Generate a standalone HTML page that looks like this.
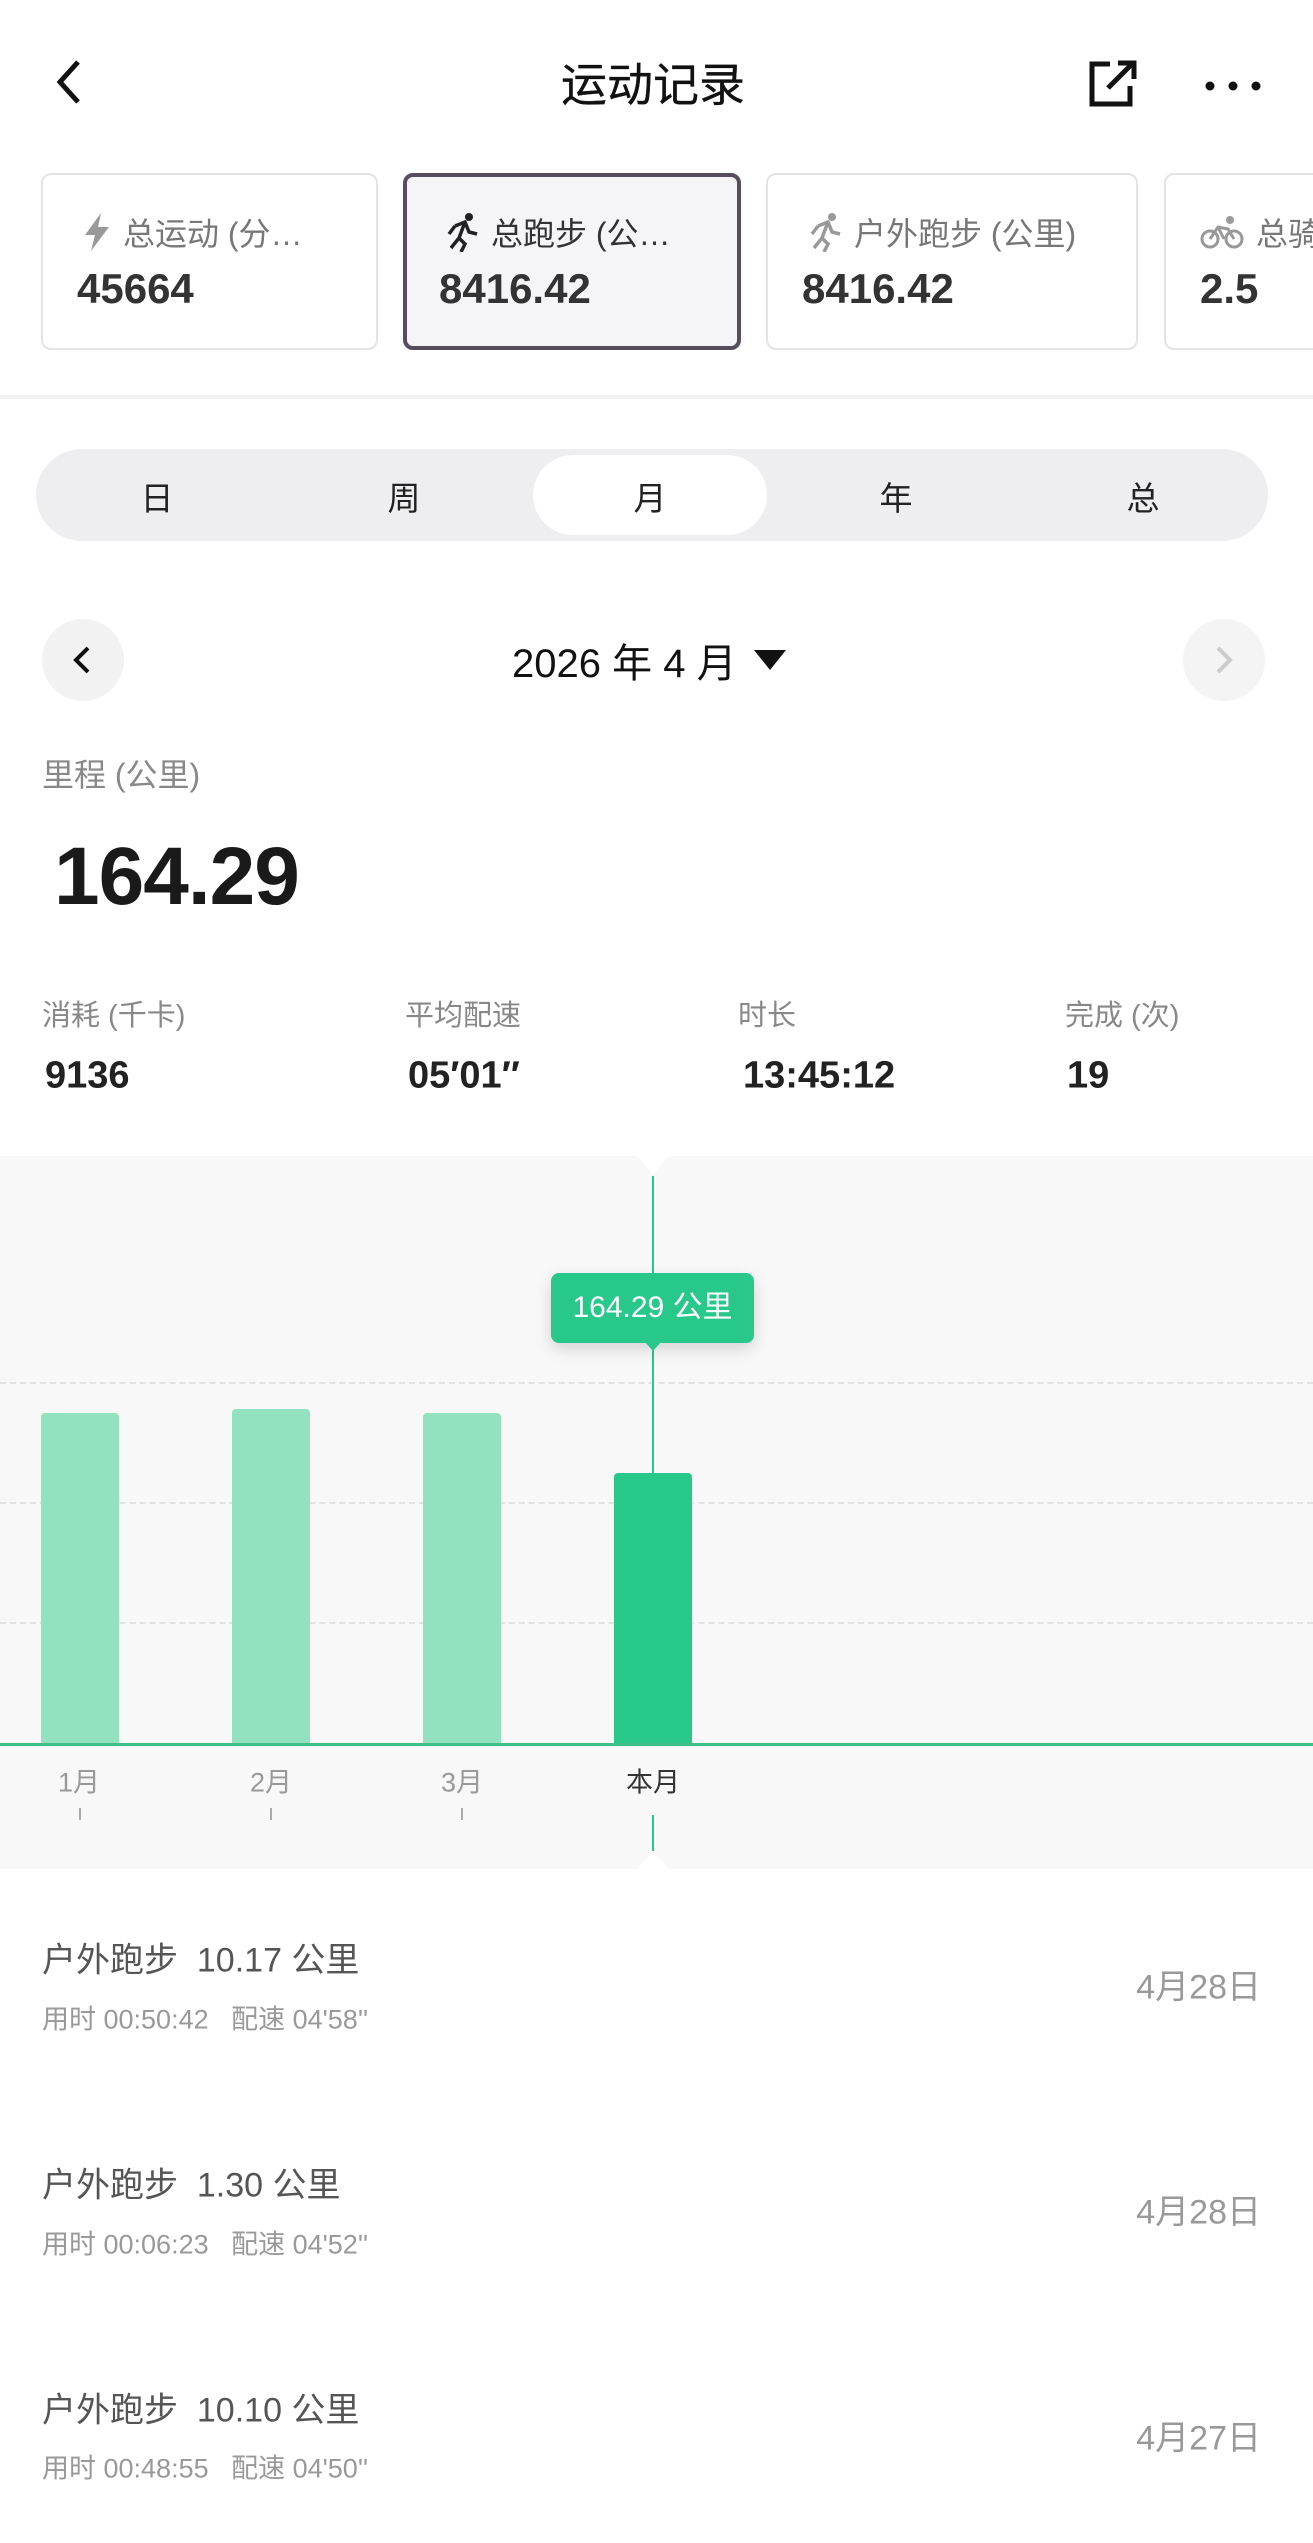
<!DOCTYPE html>
<html><head><meta charset="utf-8"><style>
*{margin:0;padding:0;box-sizing:border-box}
body{width:1313px;height:2543px;background:#fff;position:relative;overflow:hidden;font-family:"Liberation Sans","Noto Sans CJK SC",sans-serif;color:#222}
.a{position:absolute;white-space:nowrap}
.card{position:absolute;top:173px;height:177px;border:2px solid #e4e4e4;border-radius:10px;background:#fff}
.card .l{position:absolute;left:40px;top:34px;font-size:32px;color:#777;display:flex;align-items:center;gap:12px}
.card .v{position:absolute;left:34px;top:90px;font-size:42px;font-weight:bold;color:#333}
.seg{position:absolute;top:496px;font-size:33px;transform:translate(-50%,-50%)}
.mid{transform:translateY(-50%)}
.bar{position:absolute;width:78px;border-radius:4px 4px 0 0}
.dash{position:absolute;left:0;width:1313px;border-top:2px dashed #e2e2e2}
.xl{position:absolute;top:1780px;font-size:27px;color:#999;transform:translate(-50%,-50%)}
.tk{position:absolute;top:1808px;width:2px;height:12px;background:#aaa}
.it{position:absolute;left:42px;font-size:34px;color:#555}
.sb{position:absolute;left:42px;font-size:27px;color:#999}
.dt{position:absolute;right:52px;font-size:34px;color:#999}
</style></head><body>
<svg class="a" style="left:50px;top:58px" width="36" height="48" viewBox="0 0 36 48"><path d="M28 4 L10 24 L28 44" fill="none" stroke="#111" stroke-width="5"/></svg>
<div class="a mid" style="left:0;width:1306px;text-align:center;top:82px;font-size:46px;color:#111;-webkit-text-stroke:0.3px #111">运动记录</div>
<svg class="a" style="left:1088px;top:58px" width="52" height="50" viewBox="0 0 52 50"><path d="M22 6 H4 V46 H42 V28" fill="none" stroke="#111" stroke-width="5"/><path d="M20 30 L44 6 M30 5 H46 V21" fill="none" stroke="#111" stroke-width="5"/></svg>
<div class="a" style="left:1205px;top:78px"><svg width="56" height="10"><circle cx="5" cy="5" r="4.5" fill="#111"/><circle cx="28" cy="5" r="4.5" fill="#111"/><circle cx="51" cy="5" r="4.5" fill="#111"/></svg></div>

<div class="card" style="left:41px;width:337px"><div class="l"><svg width="28" height="38" viewBox="0 0 28 38"><path d="M18 0 L2 22 H12 L8 38 L26 14 H15 Z" fill="#999"/></svg>总运动 (分…</div><div class="v">45664</div></div>
<div class="card" style="left:403px;width:338px;border:4px solid #564d5e;background:#f5f5f8"><div class="l" style="color:#333;left:38px;top:32px"><svg width="34" height="40" viewBox="0 0 34 40"><circle cx="24" cy="5" r="4" fill="#222"/><path d="M10 14 L20 10 L24 20 L32 22 M20 10 L14 26 L20 32 L16 40 M14 26 L6 36 M10 14 L4 22" fill="none" stroke="#222" stroke-width="3.5"/></svg>总跑步 (公…</div><div class="v" style="left:32px;top:88px">8416.42</div></div>
<div class="card" style="left:766px;width:372px"><div class="l"><svg width="34" height="40" viewBox="0 0 34 40"><circle cx="24" cy="5" r="4" fill="#999"/><path d="M10 14 L20 10 L24 20 L32 22 M20 10 L14 26 L20 32 L16 40 M14 26 L6 36 M10 14 L4 22" fill="none" stroke="#999" stroke-width="3.5"/></svg>户外跑步 (公里)</div><div class="v">8416.42</div></div>
<div class="card" style="left:1164px;width:200px"><div class="l" style="left:34px"><svg width="44" height="34" viewBox="0 0 44 34"><circle cx="10" cy="24" r="8" fill="none" stroke="#999" stroke-width="3"/><circle cx="34" cy="24" r="8" fill="none" stroke="#999" stroke-width="3"/><circle cx="30" cy="5" r="4" fill="#999"/><path d="M10 24 L18 12 L28 14 L34 24 M18 12 L24 24" fill="none" stroke="#999" stroke-width="3"/></svg>总骑</div><div class="v">2.5</div></div>

<div class="a" style="left:0;top:395px;width:1313px;height:4px;background:#f2f2f2"></div>

<div class="a" style="left:36px;top:449px;width:1232px;height:92px;border-radius:46px;background:#eeeef0"></div>
<div class="a" style="left:533px;top:455px;width:234px;height:80px;border-radius:40px;background:#fff"></div>
<div class="seg" style="left:157px">日</div><div class="seg" style="left:404px">周</div><div class="seg" style="left:650px">月</div><div class="seg" style="left:896px">年</div><div class="seg" style="left:1143px">总</div>

<div class="a" style="left:42px;top:619px;width:82px;height:82px;border-radius:50%;background:#f2f2f2"></div>
<svg class="a" style="left:70px;top:645px" width="24" height="30" viewBox="0 0 24 30"><path d="M18 3 L6 15 L18 27" fill="none" stroke="#111" stroke-width="4"/></svg>
<div class="a" style="left:1183px;top:619px;width:82px;height:82px;border-radius:50%;background:#f4f4f4"></div>
<svg class="a" style="left:1212px;top:645px" width="24" height="30" viewBox="0 0 24 30"><path d="M6 3 L18 15 L6 27" fill="none" stroke="#ccc" stroke-width="4"/></svg>
<div class="a mid" style="left:512px;top:660px;font-size:40px;color:#111">2026 年 4 月</div>
<svg class="a" style="left:754px;top:650px" width="32" height="20"><path d="M0 0 H32 L16 20 Z" fill="#111"/></svg>

<div class="a mid" style="left:42px;top:773px;font-size:32px;color:#888">里程 (公里)</div>
<div class="a mid" style="left:54px;top:877px;font-size:82px;font-weight:bold;color:#1a1a1a;letter-spacing:-1px">164.29</div>

<div class="a mid" style="left:42px;top:1013px;font-size:29px;color:#888">消耗 (千卡)</div>
<div class="a mid" style="left:405px;top:1013px;font-size:29px;color:#888">平均配速</div>
<div class="a mid" style="left:738px;top:1013px;font-size:29px;color:#888">时长</div>
<div class="a mid" style="left:1065px;top:1013px;font-size:29px;color:#888">完成 (次)</div>
<div class="a mid" style="left:45px;top:1076px;font-size:38px;font-weight:bold">9136</div>
<div class="a mid" style="left:408px;top:1076px;font-size:38px;font-weight:bold">05′01″</div>
<div class="a mid" style="left:743px;top:1076px;font-size:38px;font-weight:bold">13:45:12</div>
<div class="a mid" style="left:1067px;top:1076px;font-size:38px;font-weight:bold">19</div>

<div class="a" style="left:0;top:1156px;width:1313px;height:713px;background:#f8f8f8"></div>
<svg class="a" style="left:637px;top:1156px" width="32" height="20"><path d="M0 0 H32 L16 18 Z" fill="#fff"/></svg>
<svg class="a" style="left:637px;top:1851px" width="32" height="18"><path d="M0 18 H32 L16 0 Z" fill="#fff"/></svg>
<div class="dash" style="top:1382px"></div><div class="dash" style="top:1502px"></div><div class="dash" style="top:1622px"></div>
<div class="bar" style="left:41px;top:1413px;height:331px;background:#92e2c0"></div>
<div class="bar" style="left:232px;top:1409px;height:335px;background:#92e2c0"></div>
<div class="bar" style="left:423px;top:1413px;height:331px;background:#92e2c0"></div>
<div class="bar" style="left:614px;top:1473px;height:271px;background:#28c78a"></div>
<div class="a" style="left:652px;top:1176px;width:2px;height:298px;background:#28c78a"></div>
<div class="a" style="left:652px;top:1815px;width:2px;height:36px;background:#28c78a"></div>
<div class="a" style="left:0;top:1743px;width:1313px;height:3px;background:#3fbf8a"></div>
<div class="a" style="left:551px;top:1273px;width:203px;height:70px;border-radius:8px;background:#28c78a;box-shadow:0 6px 16px rgba(0,0,0,.15);color:#fff;font-size:30px;text-align:center;line-height:70px">164.29 公里</div>
<svg class="a" style="left:645px;top:1342px" width="16" height="10"><path d="M0 0 H16 L8 9 Z" fill="#28c78a"/></svg>
<div class="xl" style="left:79px">1月</div><div class="xl" style="left:271px">2月</div><div class="xl" style="left:462px">3月</div><div class="xl" style="left:653px;color:#333">本月</div>
<div class="tk" style="left:79px"></div><div class="tk" style="left:270px"></div><div class="tk" style="left:461px"></div>

<div class="it mid" style="top:1957px">户外跑步&nbsp; 10.17 公里</div>
<div class="sb mid" style="top:2017px">用时 00:50:42&nbsp;&nbsp; 配速 04'58''</div>
<div class="dt mid" style="top:1984px">4月28日</div>
<div class="it mid" style="top:2182px">户外跑步&nbsp; 1.30 公里</div>
<div class="sb mid" style="top:2242px">用时 00:06:23&nbsp;&nbsp; 配速 04'52''</div>
<div class="dt mid" style="top:2209px">4月28日</div>
<div class="it mid" style="top:2407px">户外跑步&nbsp; 10.10 公里</div>
<div class="sb mid" style="top:2466px">用时 00:48:55&nbsp;&nbsp; 配速 04'50''</div>
<div class="dt mid" style="top:2435px">4月27日</div>
</body></html>
